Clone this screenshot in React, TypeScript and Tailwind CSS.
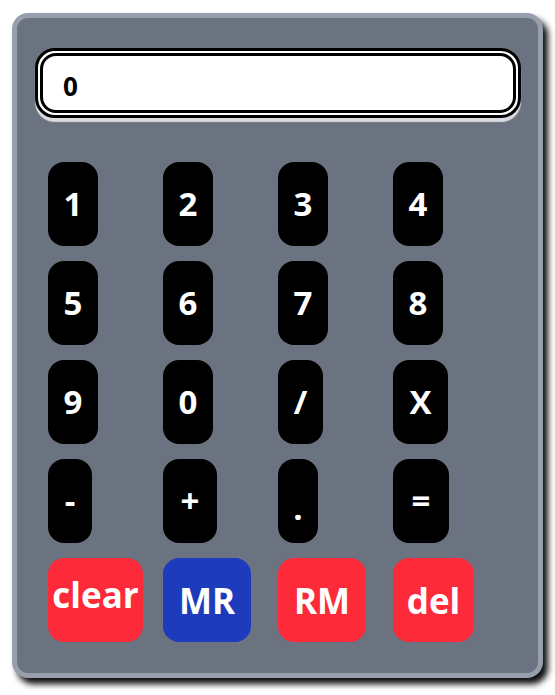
import React, { useState } from "react";

type Key = { label: string; w: string; tone?: "red" | "blue"; extra?: string };

const rows: Key[][] = [
  [
    { label: "1", w: "w-[50px]" },
    { label: "2", w: "w-[50px]" },
    { label: "3", w: "w-[50px]" },
    { label: "4", w: "w-[50px]" },
  ],
  [
    { label: "5", w: "w-[50px]" },
    { label: "6", w: "w-[50px]" },
    { label: "7", w: "w-[50px]" },
    { label: "8", w: "w-[50px]" },
  ],
  [
    { label: "9", w: "w-[50px]" },
    { label: "0", w: "w-[50px]" },
    { label: "/", w: "w-[45px]" },
    { label: "X", w: "w-[55px]" },
  ],
  [
    { label: "-", w: "w-[44px]", extra: "text-[28px]" },
    { label: "+", w: "w-[54px]", extra: "text-[28px]" },
    { label: ".", w: "w-[40px]", extra: "text-[28px] pt-[14px]" },
    { label: "=", w: "w-[56px]", extra: "text-[28px]" },
  ],
  [
    { label: "clear", w: "w-[95px]", tone: "red", extra: "pb-[10px]" },
    { label: "MR", w: "w-[88px]", tone: "blue", extra: "pt-[2px]" },
    { label: "RM", w: "w-[88px]", tone: "red", extra: "pt-[2px]" },
    { label: "del", w: "w-[81px]", tone: "red", extra: "pt-[2px]" },
  ],
];

export default function App() {
  const [display, setDisplay] = useState("0");

  const handleKey = (label: string) => {
    if (label === "clear") return setDisplay("0");
    if (label === "del") return setDisplay((d) => (d.length > 1 ? d.slice(0, -1) : "0"));
    if (label === "MR" || label === "RM") return;
    setDisplay((d) => (d === "0" ? label : d + label));
  };

  return (
    <div className="min-h-[695px] bg-white pl-[12px] pt-[13px] font-['Open_Sans',sans-serif]">
      <div className="h-[665px] w-[531px] rounded-[16px] border-[5px] border-[#979fac] bg-[#6b7280] shadow-[5px_6px_6px_rgba(0,0,0,0.95)]">
        {/* display */}
        <div className="pl-[18px] pr-[17px] pt-[30px]">
          <div className="h-[70px] rounded-[20px] border-[3px] border-black bg-white p-[2px] shadow-[0_4px_1px_rgba(229,231,235,0.9)]">
            <div className="flex h-full items-center rounded-[16px] border-[3px] border-black px-[20px] pt-[6px] text-[26px] font-bold text-black">
              {display}
            </div>
          </div>
        </div>

        {/* keypad */}
        <div className="flex flex-col gap-[15px] pl-[31px] pt-[44px]">
          {rows.map((row, i) => (
            <div key={i} className="grid grid-cols-[115px_115px_115px_115px]">
              {row.map((k) => (
                <button
                  key={k.label}
                  onClick={() => handleKey(k.label)}
                  className={`flex h-[84px] items-center justify-center rounded-[16px] font-bold text-white ${k.w} ${
                    k.tone === "red"
                      ? "bg-[#fd2b39] text-[35px]"
                      : k.tone === "blue"
                      ? "bg-[#1c3bbd] text-[35px]"
                      : "bg-black text-[33px]"
                  } ${k.extra ?? ""}`}
                >
                  {k.label}
                </button>
              ))}
            </div>
          ))}
        </div>
      </div>
    </div>
  );
}
